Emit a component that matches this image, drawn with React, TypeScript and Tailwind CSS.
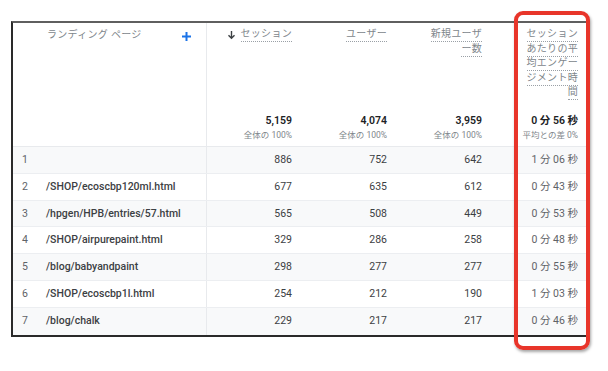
import React from 'react';

const rows = [
  { n: 1, page: '', s: '886', u: '752', nu: '642', t: '1 分 06 秒' },
  { n: 2, page: '/SHOP/ecoscbp120ml.html', s: '677', u: '635', nu: '612', t: '0 分 43 秒' },
  { n: 3, page: '/hpgen/HPB/entries/57.html', s: '565', u: '508', nu: '449', t: '0 分 53 秒' },
  { n: 4, page: '/SHOP/airpurepaint.html', s: '329', u: '286', nu: '258', t: '0 分 48 秒' },
  { n: 5, page: '/blog/babyandpaint', s: '298', u: '277', nu: '277', t: '0 分 55 秒' },
  { n: 6, page: '/SHOP/ecoscbp1l.html', s: '254', u: '212', nu: '190', t: '1 分 03 秒' },
  { n: 7, page: '/blog/chalk', s: '229', u: '217', nu: '217', t: '0 分 46 秒' },
];

function Dotted({ children }: { children: React.ReactNode }) {
  return (
    <span className="border-b border-dotted border-[#9aa0a6] leading-[12px] pb-[1px]">{children}</span>
  );
}

function HeadCell({ lines, arrow, total, sub }: { lines: string[]; arrow?: boolean; total: string; sub: string }) {
  return (
    <div className="flex flex-col justify-between items-end pr-[10px] pt-[5px] pb-[4px] h-full">
      <div className="flex flex-col items-end gap-[0.5px] text-[10px] text-[#80868b] tracking-[0.3px]">
        {lines.map((l, i) => (
          <div key={i} className="flex items-center">
            {arrow && i === 0 && (
              <svg width="9" height="10" viewBox="0 0 9 10" className="mr-[5px]">
                <path d="M4.5 1v7M1.5 5.2l3 3 3-3" stroke="#3c4043" strokeWidth="1.4" fill="none" />
              </svg>
            )}
            <Dotted>{l}</Dotted>
          </div>
        ))}
      </div>
      <div className="flex flex-col items-end">
        <div className="text-[10.5px] font-semibold text-[#202124] leading-[15px]">{total}</div>
        <div className="text-[8.5px] text-[#80868b] leading-[14px]">{sub}</div>
      </div>
    </div>
  );
}

export default function App() {
  return (
    <div
      className="relative w-[608px] h-[371px] bg-white pt-[21px] pl-[11px] overflow-hidden"
      style={{ fontFamily: 'Roboto, "Noto Sans CJK JP", sans-serif' }}
    >
      <div className="w-[577px] border-l-2 border-t-2 border-b-2 border-l-[#2a2a2a] border-t-[#5f5f5f] border-b-[#2a2a2a] bg-white">
        {/* Header */}
        <div className="grid grid-cols-[194px_95px_95px_95px_96px] h-[124px] border-b border-[#e8eaed]">
          <div className="border-r border-[#e8eaed] flex items-start justify-between pl-[34px] pr-[14px] pt-[4px]">
            <span className="text-[10px] text-[#80868b] tracking-[0.3px]">ランディング ページ</span>
            <svg width="11" height="11" viewBox="0 0 11 11" className="mt-[4px]">
              <path d="M5.5 1v9M1 5.5h9" stroke="#1a73e8" strokeWidth="2" />
            </svg>
          </div>
          <HeadCell lines={['セッション']} arrow total="5,159" sub="全体の 100%" />
          <HeadCell lines={['ユーザー']} total="4,074" sub="全体の 100%" />
          <HeadCell lines={['新規ユーザ', 'ー数']} total="3,959" sub="全体の 100%" />
          <HeadCell
            lines={['セッション', 'あたりの平', '均エンゲー', 'ジメント時', '間']}
            total="0 分 56 秒"
            sub="平均との差 0%"
          />
        </div>

        {/* Rows */}
        {rows.map((r) => (
          <div
            key={r.n}
            className={`grid grid-cols-[194px_95px_95px_95px_96px] h-[26.8px] items-center text-[10.5px] text-[#3c4043] border-b border-[#eceef1] last:border-b-0 ${
              r.n % 2 === 1 ? 'bg-[#f8f9fa]' : 'bg-white'
            }`}
          >
            <div className="border-r border-[#e8eaed] h-full flex items-center pl-[9px]">
              <span className="w-[24px] text-[#5f6368]">{r.n}</span>
              <span className="font-medium text-[#3c4043]">{r.page}</span>
            </div>
            <div className="text-right pr-[10px]">{r.s}</div>
            <div className="text-right pr-[10px]">{r.u}</div>
            <div className="text-right pr-[10px]">{r.nu}</div>
            <div className="text-right pr-[10px] text-[#5f6368]">{r.t}</div>
          </div>
        ))}
      </div>

      {/* Highlight box */}
      <div className="absolute left-[514px] top-[11px] w-[76px] h-[339px] border-[4px] border-[#e8352a] rounded-[9px] shadow-[1px_2px_3px_rgba(0,0,0,0.35)]" />
    </div>
  );
}
